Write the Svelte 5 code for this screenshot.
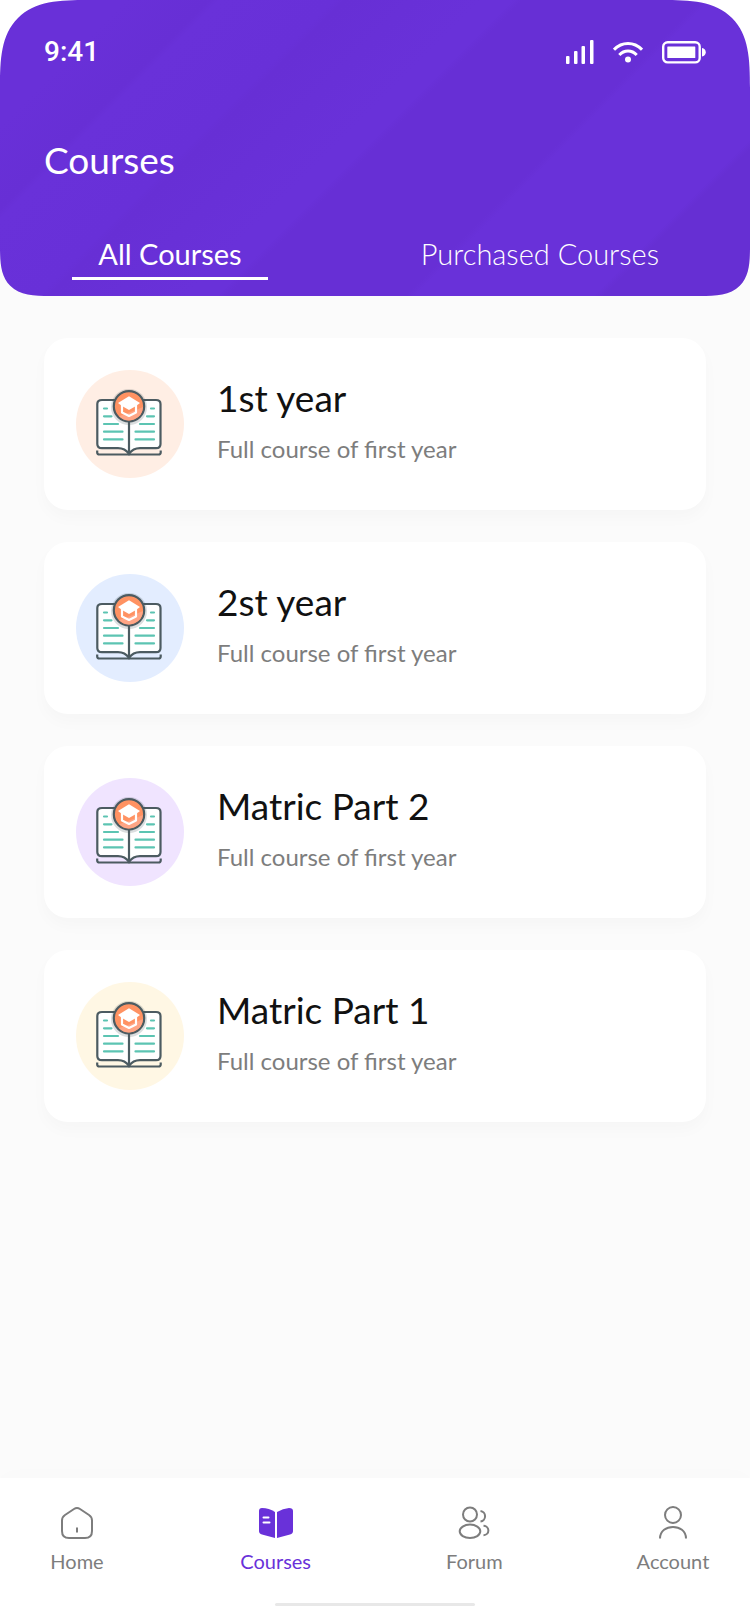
<script>
  const courses = [
    { title: '1st year', text: 'Full course of first year', tint: '#ffeee4' },
    { title: '2st year', text: 'Full course of first year', tint: '#e3edff' },
    { title: 'Matric Part 2', text: 'Full course of first year', tint: '#f0e4ff' },
    { title: 'Matric Part 1', text: 'Full course of first year', tint: '#fff7e4' }
  ];
  const tabs = ['All Courses', 'Purchased Courses'];
  const links = ['Home', 'Courses', 'Forum', 'Account'];
  let tab = $state('All Courses');
</script>

<div class="screen">
  <header>
    <div class="status">
      <span class="time">9:41</span>
      <div class="signals">
        <svg width="28" height="24" viewBox="0 0 28 24" fill="#fff" aria-hidden="true">
          <rect x="0" y="16" width="3.500" height="8" rx="1" />
          <rect x="8" y="11" width="3.500" height="13" rx="1" />
          <rect x="15.500" y="6" width="3.500" height="18" rx="1" />
          <rect x="24" y="0" width="3.500" height="24" rx="1" />
        </svg>
        <svg width="30" height="21" viewBox="0 0 30 21" fill="none" stroke="#fff" stroke-width="3" aria-hidden="true">
          <path d="M1 7.700Q7 1.600 15 1.600T29 7.700" />
          <path d="M6.300 13Q10 9 15 9T23.700 13" />
          <circle cx="15" cy="17.500" r="3" fill="#fff" stroke="none" />
        </svg>
        <svg width="44" height="23" viewBox="0 0 44 23" aria-hidden="true">
          <rect x="1.200" y="1.200" width="36.500" height="20.200" rx="4.500" fill="none" stroke="#fff" stroke-width="2.400" />
          <rect x="5.300" y="5.500" width="28" height="11.500" rx="0.500" fill="#fff" />
          <path d="M40 7C45 7.500 45 15 40 15.500Z" fill="#fff" />
        </svg>
      </div>
    </div>
    <h1>Courses</h1>
    <div class="tabs" role="tablist">
      {#each tabs as name}
        <button type="button" role="tab" aria-selected={tab === name} class:active={tab === name} onclick={() => (tab = name)}>{name}</button>
      {/each}
    </div>
  </header>

  <main>
    {#each courses as course}
      <article>
        <svg class="badge" width="108" height="108" viewBox="0 0 108 108" aria-hidden="true">
          <circle cx="54" cy="54" r="54" fill={course.tint} />
          <path d="M53 84Q49 78.200 42 78.200H26Q21.300 78.200 21.300 74V34Q21.300 30 26 30H80Q84.500 30 84.500 34V74Q84.500 78.200 80 78.200H64Q57 78.200 53 84Z" fill="#fff" stroke="#4c5b61" stroke-width="2.200" />
          <path d="M21.200 80.500V82.500Q21.200 84.500 23.500 84.500H82.500Q84.700 84.500 84.700 82.500V80.500M53 50V84" fill="none" stroke="#4c5b61" stroke-width="2.200" />
          <g stroke="#5cc4b2" stroke-width="2.200" stroke-linecap="round">
            <path d="M28 38.500H31M28 46.300H35.500M28 54H42M28 61.700H46.500M28 69.400H46.500" />
            <path d="M75 38.500H78M71 46.300H78M64 54H78M59.500 61.700H78M59.500 69.400H78" />
          </g>
          <circle cx="53" cy="37" r="18" fill="#4c5b61" opacity="0.200" />
          <circle cx="53" cy="36.300" r="15.200" fill="#ff9262" stroke="#4c5b61" stroke-width="2.200" />
          <path d="M67 37A14.100 14.100 0 0 1 43 46.300L60 40Z" fill="#ffa585" />
          <path d="M46 35V42.500L53 46L60 42.500V35" fill="none" stroke="#fff" stroke-width="2.200" stroke-linejoin="round" />
          <path d="M53 26.300L64 33L60 36L53 40L46 36L42 33Z" fill="#fff" />
        </svg>
        <div class="text">
          <h2>{course.title}</h2>
          <p>{course.text}</p>
        </div>
      </article>
    {/each}
  </main>

  <nav>
    <div class="links">
      {#each links as name}
        <a href={'#' + name.toLowerCase()} class:current={name === 'Courses'}>
          <svg width="36" height="36" viewBox="0 0 36 36" fill="none" stroke="currentColor" stroke-width="2" aria-hidden="true">
            {#if name === 'Home'}
              <path d="M3 15.500Q3 12 6 10L15 4Q18 2 21 4L30 10Q33 12 33 15.500V26Q33 33 26 33H10Q3 33 3 26ZM18 22.500V27.500" />
            {:else if name === 'Courses'}
              <g fill="currentColor" stroke="none">
                <path d="M17 7V33L4 29.500Q1 28.500 1 26V6Q1 3 4 3Q11 3 17 7Z" />
                <path d="M19 7Q25 3.500 31 3Q35 3 35 6V26Q35 28.500 32 29.500L19 33Z" />
              </g>
              <path d="M5.500 12.500H10.500M5.500 17.500H11.500" stroke="#fff" stroke-linecap="round" />
            {:else if name === 'Forum'}
              <circle cx="14" cy="9.500" r="7" />
              <ellipse cx="14" cy="26.300" rx="10.300" ry="6.700" />
              <path d="M24.500 6A5.300 5.300 0 0 1 24.500 16.500M27.500 20.800C34 21 34 30 27.500 30.200" />
            {:else}
              <circle cx="18" cy="10" r="8" />
              <path d="M5 33.500C5 18 31 18 31 33.500" />
            {/if}
          </svg>
          <span>{name}</span>
        </a>
      {/each}
    </div>
    <div class="handle"></div>
  </nav>
</div>

<style>
  :global(body) {
    margin: 0;
    background: #fff;
  }
  .screen {
    display: flex;
    flex-direction: column;
    min-height: 100vh;
    background: linear-gradient(#fff 0 120px, #fbfbfb 120px);
    font-family: Lato, 'Noto Sans', sans-serif;
  }
  header {
    box-sizing: border-box;
    padding: 36px 44px 16px;
    border-radius: 58px 58px 32px 32px;
    color: #fff;
    background: linear-gradient(135deg, #6930d8 12%, #672fd5 20%, #6931d9 21%, #6830d8 32%, #672fd5 33%, #6931d9 46%, #6931d9 49%, #672fd5 50%, #672fd5 67%, #6931d9 68%, #6931d9 85%, #662fd3 86%);
  }
  @supports (corner-shape: superellipse(1.6)) {
    header {
      border-radius: 88px 88px 50px 50px;
      corner-shape: superellipse(1.6);
    }
  }
  .status {
    display: flex;
    justify-content: space-between;
    align-items: center;
    height: 32px;
  }
  .time {
    font: 500 28px/32px Roboto, sans-serif;
  }
  .signals {
    display: flex;
    align-items: center;
    gap: 19px;
  }
  h1 {
    margin: 70px 0 0;
    font-size: 37px;
    line-height: 44px;
    font-weight: 400;
  }
  .tabs {
    display: flex;
    justify-content: space-between;
    margin-top: 54px;
    padding: 0 47px 0 28px;
  }
  button {
    padding: 0 0 5px;
    border: 0;
    border-bottom: 3px solid transparent;
    background: none;
    color: #fff;
    font-family: inherit;
    font-size: 29px;
    line-height: 36px;
    font-weight: 300;
    cursor: pointer;
  }
  button.active {
    min-width: 196px;
    border-color: #fff;
    font-weight: 400;
  }
  main {
    display: flex;
    flex: 1;
    flex-direction: column;
    gap: 32px;
    padding: 42px 44px;
  }
  article {
    display: flex;
    align-items: flex-start;
    gap: 33px;
    padding: 32px;
    border-radius: 24px;
    background: #fff;
    box-shadow: 0 8px 16px rgba(0, 0, 0, 0.025);
  }
  .badge {
    flex: none;
  }
  .text {
    padding-top: 6px;
  }
  h2 {
    margin: 0;
    color: #111;
    font-size: 37px;
    line-height: 44px;
    font-weight: 400;
  }
  p {
    margin: 13px 0 0;
    color: #7d7d7d;
    font-size: 24px;
    line-height: 32px;
  }
  nav {
    padding: 27px 37px 18px;
    background: #fff;
    box-shadow: 0 -4px 20px rgba(0, 0, 0, 0.01);
  }
  .links {
    display: flex;
    justify-content: space-between;
  }
  a {
    display: flex;
    flex-direction: column;
    align-items: center;
    gap: 6px;
    width: 80px;
    color: #7d7d7d;
    font-size: 20px;
    line-height: 28px;
    text-decoration: none;
  }
  a.current {
    color: #6931d9;
  }
  .handle {
    width: 200px;
    height: 3px;
    margin: 28px auto 0;
    border-radius: 2px;
    background: #e8e8e8;
  }
</style>
